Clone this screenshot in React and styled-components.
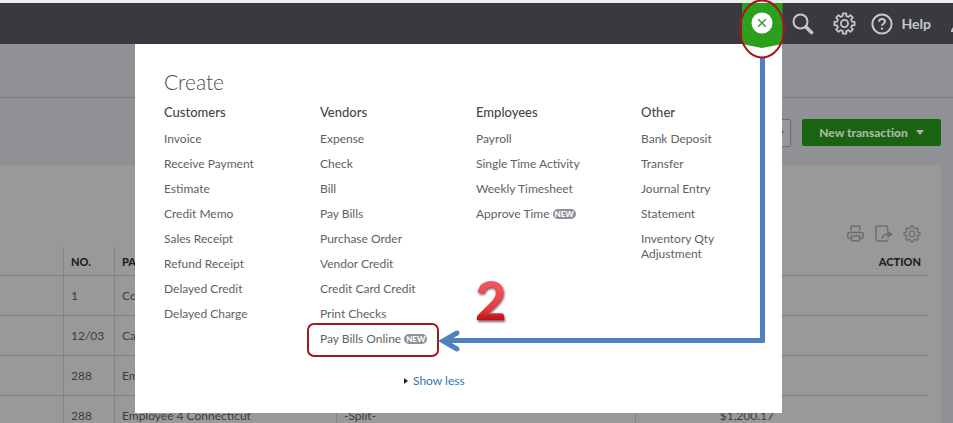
import styled, { createGlobalStyle, css } from "styled-components";

const GlobalStyle = createGlobalStyle`
  *, *::before, *::after {
    box-sizing: border-box;
  }

  body {
    margin: 0;
    overflow: hidden;
    background: #8f9194;
    color: #4b4c50;
    font-family: Lato, "Liberation Sans", sans-serif;
    font-size: 13px;
  }

  button {
    font-family: inherit;
    cursor: pointer;
  }
`;

const Page = styled.div`
  position: relative;
  min-height: 100vh;
  overflow: hidden;
`;

const TopBar = styled.header`
  display: flex;
  justify-content: flex-end;
  height: 44px;
  border-top: 3px solid #ededee;
  background: #393a3d;
`;

const BarButton = styled.button`
  display: flex;
  align-items: center;
  gap: 9px;
  margin-left: ${props => props.$space}px;
  padding: 0;
  border: none;
  background: none;
  color: #c6c7ca;
  font-size: 14px;
  font-weight: 700;
`;

const CreateWrap = styled.div`
  position: relative;
  z-index: 3;
  width: 41px;
`;

const CreateButton = styled.button`
  display: flex;
  justify-content: center;
  width: 100%;
  height: 45px;
  padding: 9px 0 0;
  border: none;
  background: #2ca01c;
  clip-path: polygon(0 0, 100% 0, 100% 41px, 50% 100%, 0 41px);
`;

const CreateRing = styled.svg`
  position: absolute;
  top: -4px;
  left: -4px;
  pointer-events: none;
`;

const PageHead = styled.div`
  height: 54px;
  border-bottom: 1px solid #7b7c80;
`;

const Toolbar = styled.div`
  display: flex;
  justify-content: flex-end;
  gap: 11px;
  height: 67px;
  padding: 21px 12px 0 0;
`;

const FilterButton = styled.button`
  display: flex;
  align-items: center;
  justify-content: flex-end;
  width: 60px;
  height: 28px;
  padding-right: 6px;
  border: 1px solid #6b6c72;
  border-radius: 2px;
  background: #97989a;
`;

const PrimaryButton = styled.button`
  display: flex;
  align-items: center;
  justify-content: center;
  gap: 8px;
  width: 139px;
  height: 27px;
  border: none;
  border-radius: 2px;
  background: #1a6411;
  color: #a6b8a4;
  font-size: 12px;
  font-weight: 900;
`;

const Caret = styled.span`
  border: 4px solid transparent;
  border-top: 5px solid ${props => props.$color};
  border-bottom: none;
`;

const Sheet = styled.section`
  margin-right: 12px;
  padding: 60px 13px 0 0;
  background: #999;
`;

const SheetTools = styled.div`
  display: flex;
  justify-content: flex-end;
  gap: 9px;
  height: 22px;
  padding-right: 7px;
`;

const ToolButton = styled.button`
  width: 19px;
  height: 18px;
  padding: 0;
  border: none;
  background: none;
  color: #6d6e73;
`;

const Table = styled.table`
  width: 100%;
  table-layout: fixed;
  border-collapse: separate;
  border-spacing: 0;
  color: #3c3d40;
  font-size: 12px;
`;

const cell = css`
  padding: 0 7px;
  border-bottom: 1px solid #7d7e80;
  border-left: ${props => (props.$divided ? "1px solid #828386" : "none")};
  text-align: ${props => props.$align || "left"};
  white-space: nowrap;
`;

const Th = styled.th`
  ${cell}
  width: ${props => props.$width || "auto"};
  height: 29px;
  color: #202124;
  font-size: 11px;
  font-weight: 900;
`;

const Td = styled.td`
  ${cell}
  height: 40px;
`;

const Popup = styled.nav`
  position: absolute;
  z-index: 2;
  top: 44px;
  left: 135px;
  right: 171px;
  height: 369px;
  padding: 24px 0 0 29px;
  background: #fff;
`;

const PopupTitle = styled.h2`
  margin: 0;
  font-size: 21px;
  font-weight: 300;
  line-height: 28px;
`;

const Groups = styled.div`
  display: grid;
  grid-template-columns: 156fr 156fr 165fr 141fr;
  padding-top: 8px;
`;

const GroupTitle = styled.h3`
  margin: 0 0 11px;
  color: #46474b;
  font-size: 13px;
  font-weight: 500;
  line-height: 16px;
`;

const Links = styled.ul`
  display: grid;
  gap: 10px;
  margin: 0;
  padding: 0;
  list-style: none;
`;

const Item = styled.li`
  position: relative;
  max-width: 110px;
  font-size: 12px;
  line-height: 15px;
  ${props => props.$wide && "max-width: none; white-space: nowrap;"}
`;

const ItemLink = styled.a`
  color: #606166;
  text-decoration: none;
`;

const Badge = styled.span`
  display: inline-block;
  margin-left: 3px;
  padding: 0 2px;
  border-radius: 5px;
  background: #8d9096;
  color: #fff;
  font-size: 8px;
  font-weight: 900;
  line-height: 10px;
  vertical-align: 1px;
`;

const Highlight = styled.span`
  position: absolute;
  top: -8px;
  left: -13px;
  width: 132px;
  height: 34px;
  border: 2px solid #9c1a20;
  border-radius: 7px;
  pointer-events: none;
`;

const ShowLess = styled.a`
  display: flex;
  align-items: center;
  gap: 5px;
  width: max-content;
  margin: 27px 0 0 240px;
  color: #2b77b8;
  font-size: 12px;
  line-height: 15px;
  text-decoration: none;

  &::before {
    content: "";
    border: 3px solid transparent;
    border-left: 4px solid #222;
    border-right: none;
  }
`;

const Connector = styled.div`
  position: absolute;
  top: 14px;
  left: 310px;
  right: 17px;
  height: 285px;
  border: solid #4f81bd;
  border-width: 0 5px 5px 0;
  border-bottom-right-radius: 2px;
  pointer-events: none;
`;

const ArrowHead = styled.svg`
  position: absolute;
  bottom: -15px;
  left: -7px;
`;

const StepNumber = styled.span`
  position: absolute;
  top: 224px;
  left: 340px;
  background: linear-gradient(#f0555a 30%, #e8363c 65%, #b9151b 80%);
  background-clip: text;
  color: transparent;
  filter: drop-shadow(1px 2px 1px #8a5a5c);
  font-size: 54px;
  font-weight: 900;
  line-height: 64px;
`;

// outline of an eight-toothed cog centred on 0,0
function cogPath(outer, inner) {
  const points = [];
  for (let i = 0; i < 8; i++) {
    const mid = (i * Math.PI) / 4;
    [
      [inner, -0.24],
      [outer, -0.17],
      [outer, 0.17],
      [inner, 0.24],
    ].forEach(([r, turn]) => {
      points.push(
        `${(r * Math.sin(mid + turn)).toFixed(2)} ${(-r * Math.cos(mid + turn)).toFixed(2)}`
      );
    });
  }
  return `M${points.join("L")}Z`;
}

function CogIcon({ size, stroke }) {
  return (
    <svg width={size} height={size} viewBox="-11 -11 22 22" fill="none" stroke="currentColor" strokeWidth={stroke} strokeLinejoin="round">
      <path d={cogPath(9.8, 7.4)} />
      <circle r="3.4" />
    </svg>
  );
}

function SearchIcon() {
  return (
    <svg width="22" height="22" viewBox="0 0 22 22" fill="none" stroke="currentColor">
      <circle cx="8.5" cy="8.5" r="7" strokeWidth="2" />
      <path d="M14 14 19.5 19.5" strokeWidth="3.6" strokeLinecap="round" />
    </svg>
  );
}

function HelpIcon() {
  return (
    <svg width="22" height="22" viewBox="0 0 22 22" fill="none" stroke="currentColor" strokeWidth="2">
      <circle cx="11" cy="11" r="9.6" />
      <path d="M8 8.8c0-1.7 1.3-2.8 3-2.8s3 1.1 3 2.6c0 2-3 2.2-3 4.2" />
      <circle cx="11" cy="15.6" r="1.2" fill="currentColor" stroke="none" />
    </svg>
  );
}

function CloseIcon() {
  return (
    <svg width="22" height="22" viewBox="0 0 22 22">
      <circle cx="11" cy="11" r="10.5" fill="#fff" />
      <path d="M7.2 7.2l7.6 7.6M14.8 7.2l-7.6 7.6" stroke="#3f8f35" strokeWidth="1.4" />
    </svg>
  );
}

function PrintIcon() {
  return (
    <svg width="17" height="17" viewBox="0 0 17 17" fill="none" stroke="currentColor" strokeWidth="1.5">
      <path d="M4.2 5.5V1.2h8.6v4.3" />
      <path d="M4 13.4H2.4C1.4 13.4.8 12.8.8 12V9.2c0-1 .7-1.6 1.6-1.6h12.200c.9 0 1.600.6 1.600 1.600V12c0 .8-.6 1.400-1.600 1.400H13" />
      <path d="M4.200 11h8.600l-.8 4.800H5z" />
    </svg>
  );
}

function ExportIcon() {
  return (
    <svg width="18" height="17" viewBox="0 0 18 17" fill="none" stroke="currentColor" strokeWidth="1.5">
      <path d="M12.6 5.500V2.400c0-.9-.6-1.500-1.500-1.500H2.400C1.500.9.900 1.500.9 2.400v12.200c0 .9.600 1.500 1.500 1.500h8.700c.9 0 1.500-.5 1.500-1.400" />
      <path d="M7.200 14c.2-3.200 2-4.800 5.600-4.800" />
      <path d="M13 6.600 16.600 9.200 13 11.800z" fill="currentColor" />
    </svg>
  );
}

const groups = [
  {
    title: "Customers",
    items: [
      "Invoice",
      "Receive Payment",
      "Estimate",
      "Credit Memo",
      "Sales Receipt",
      "Refund Receipt",
      "Delayed Credit",
      "Delayed Charge",
    ],
  },
  {
    title: "Vendors",
    items: [
      "Expense",
      "Check",
      "Bill",
      "Pay Bills",
      "Purchase Order",
      "Vendor Credit",
      "Credit Card Credit",
      "Print Checks",
      "Pay Bills Online",
    ],
  },
  {
    title: "Employees",
    items: ["Payroll", "Single Time Activity", "Weekly Timesheet", "Approve Time"],
  },
  {
    title: "Other",
    items: ["Bank Deposit", "Transfer", "Journal Entry", "Statement", "Inventory Qty Adjustment"],
  },
];

const newItems = ["Pay Bills Online", "Approve Time"];
const highlighted = "Pay Bills Online";

const rows = [
  { no: "1", payee: "Co" },
  { no: "12/03", payee: "Ca" },
  { no: "288", payee: "Em" },
  { no: "288", payee: "Employee 4 Connecticut", category: "-Split-", total: "$1,200.17" },
];

function Header() {
  return (
    <TopBar>
      <CreateWrap>
        <CreateButton aria-label="Close create menu">
          <CloseIcon />
        </CreateButton>
        <CreateRing width="48" height="60" viewBox="0 0 48 60">
          <ellipse cx="24" cy="30" rx="22" ry="28.5" fill="none" stroke="#a8141b" strokeWidth="2" />
        </CreateRing>
      </CreateWrap>
      <BarButton $space={9} aria-label="Search">
        <SearchIcon />
      </BarButton>
      <BarButton $space={19} aria-label="Settings">
        <CogIcon size={23} stroke={1.7} />
      </BarButton>
      <BarButton $space={15}>
        <HelpIcon />
        Help
      </BarButton>
      <BarButton $space={20} aria-label="Account">
        <svg width="2" height="22" viewBox="0 0 2 22">
          <path d="M0 17.5 2 14v5H0z" fill="currentColor" />
        </svg>
      </BarButton>
    </TopBar>
  );
}

function Transactions() {
  return (
    <Sheet>
      <SheetTools>
        <ToolButton aria-label="Print">
          <PrintIcon />
        </ToolButton>
        <ToolButton aria-label="Export">
          <ExportIcon />
        </ToolButton>
        <ToolButton aria-label="Table settings">
          <CogIcon size={18} stroke={1.6} />
        </ToolButton>
      </SheetTools>
      <Table>
        <thead>
          <tr>
            <Th $width="63px" />
            <Th $divided $width="51px">NO.</Th>
            <Th $divided $width="222px">PA</Th>
            <Th $divided />
            <Th $divided $width="146px" />
            <Th $width="147px" $align="right">ACTION</Th>
          </tr>
        </thead>
        <tbody>
          {rows.map((row, i) => (
            <tr key={i}>
              <Td />
              <Td $divided>{row.no}</Td>
              <Td $divided>{row.payee}</Td>
              <Td $divided>{row.category}</Td>
              <Td $divided $align="right">{row.total}</Td>
              <Td />
            </tr>
          ))}
        </tbody>
      </Table>
    </Sheet>
  );
}

function CreateMenu() {
  return (
    <Popup aria-label="Create">
      <PopupTitle>Create</PopupTitle>
      <Groups>
        {groups.map(group => (
          <div key={group.title}>
            <GroupTitle>{group.title}</GroupTitle>
            <Links>
              {group.items.map(name => (
                <Item key={name} $wide={newItems.includes(name)}>
                  <ItemLink href="#">{name}</ItemLink>
                  {newItems.includes(name) && <Badge>NEW</Badge>}
                  {name === highlighted && <Highlight />}
                </Item>
              ))}
            </Links>
          </div>
        ))}
      </Groups>
      <ShowLess href="#">Show less</ShowLess>
      <StepNumber>2</StepNumber>
      <Connector>
        <ArrowHead width="24" height="24" viewBox="0 0 24 24" fill="none" stroke="#4f81bd" strokeWidth="5" strokeLinecap="round" strokeLinejoin="miter">
          <path d="M19 4 5 12 19 20" />
        </ArrowHead>
      </Connector>
    </Popup>
  );
}

export default function App() {
  return (
    <Page>
      <GlobalStyle />
      <Header />
      <main>
        <PageHead />
        <Toolbar>
          <FilterButton aria-label="Filter">
            <Caret $color="#4b4c50" />
          </FilterButton>
          <PrimaryButton>
            New transaction
            <Caret $color="#a6b8a4" />
          </PrimaryButton>
        </Toolbar>
        <Transactions />
      </main>
      <CreateMenu />
    </Page>
  );
}
